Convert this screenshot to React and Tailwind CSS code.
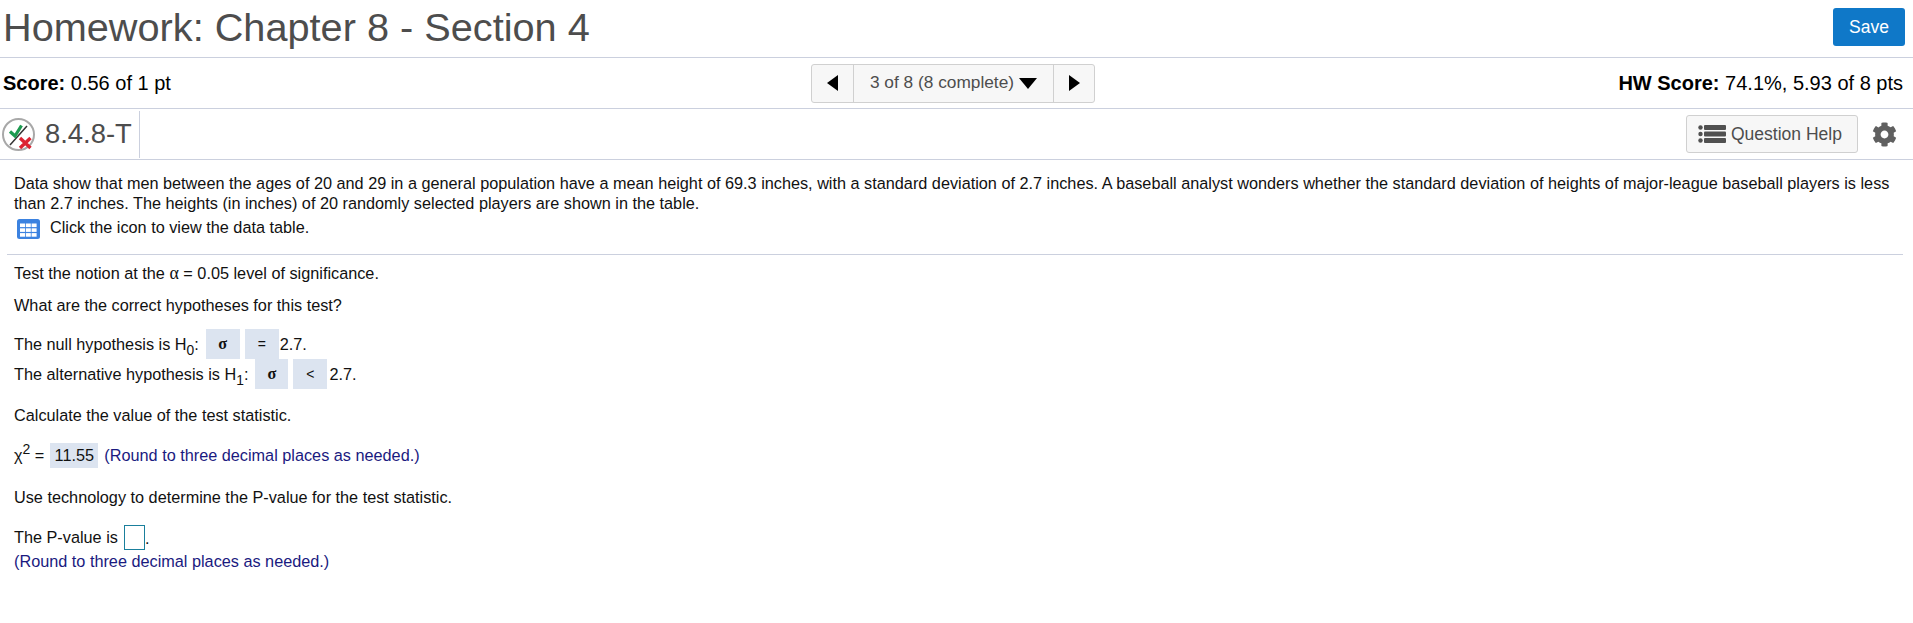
import { FaCog } from 'react-icons/fa'

// Small drawings used by the toolbar and the question body
function StatusIcon() {
  return (
    <svg width="33" height="33" viewBox="0 0 33 33" className="shrink-0">
      <circle cx="16.5" cy="16.5" r="15.5" fill="#fff" stroke="#a8a8a8" strokeWidth="2" />
      <path d="M8 27 L25 8" stroke="#333" strokeWidth="1.5" />
      <path d="M8 13.5 L13 18 L19.5 7.5" fill="none" stroke="#1d9a50" strokeWidth="3.2" />
      <path d="M18 20 L28.5 30 M28.5 20 L18 30" stroke="#dc2433" strokeWidth="3.4" />
    </svg>
  )
}

function ListIcon() {
  return (
    <svg width="28" height="18" viewBox="0 0 28 18" className="shrink-0" fill="#505050">
      <circle cx="2.5" cy="2.5" r="2.2" />
      <circle cx="2.5" cy="9" r="2.2" />
      <circle cx="2.5" cy="15.5" r="2.2" />
      <rect x="6" y="0" width="22" height="5" rx="1" />
      <rect x="6" y="6.5" width="22" height="5" rx="1" />
      <rect x="6" y="13" width="22" height="5" rx="1" />
    </svg>
  )
}

function TableIcon() {
  const cells = []
  for (let r = 0; r < 3; r++) {
    for (let c = 0; c < 3; c++) {
      cells.push(<rect key={`${r}-${c}`} x={3 + c * 5.8} y={4.5 + r * 4.8} width="5" height="3.6" fill="#fff" />)
    }
  }
  return (
    <svg width="23" height="20" viewBox="0 0 23 20" className="mt-1 shrink-0">
      <rect width="23" height="20" rx="2.5" fill="#3b82e0" />
      {cells}
    </svg>
  )
}

function Triangle({ dir }) {
  const points = { left: '11,0 11,16 0,8', right: '0,0 0,16 11,8' }
  return (
    <svg width="11" height="16" viewBox="0 0 11 16">
      <polygon points={points[dir]} fill="#000" />
    </svg>
  )
}

function Answer({ children, className = '' }) {
  return (
    <span className={`inline-flex items-center justify-center bg-[#dce4f0] ${className}`}>{children}</span>
  )
}

export default function App() {
  return (
    <div className="min-h-[623px] bg-white font-['Liberation_Sans',Arial,sans-serif] text-black">
      {/* Title */}
      <div className="flex h-[58px] items-start justify-between border-b border-[#cbd0de] pl-[3px] pr-2">
        <h1 className="mt-[3px] text-[39.7px] leading-[48px] text-[#4d4d4d]">Homework: Chapter 8 - Section 4</h1>
        <button className="mt-2 h-[38px] w-[72px] rounded-[3px] bg-[#0f78c8] text-[17.5px] text-white">Save</button>
      </div>

      {/* Score row */}
      <div className="grid h-[51px] grid-cols-[1fr_284px_1fr] items-center border-b border-[#cbd0de] pl-[3px] pr-[10px] text-[20px]">
        <div>
          <b>Score:</b> 0.56 of 1 pt
        </div>
        <div className="flex h-[39px] items-stretch rounded-[3px] border border-[#d0d0d0] bg-[#f7f7f7]">
          <div className="flex w-[42px] items-center justify-center border-r border-[#d0d0d0]">
            <Triangle dir="left" />
          </div>
          <div className="flex w-[200px] items-center justify-center gap-[5px] border-r border-[#d0d0d0] text-[17.3px] text-[#4d4d4d]">
            <span>3 of 8 (8 complete)</span>
            <svg width="18" height="11" viewBox="0 0 18 11">
              <polygon points="0,0 18,0 9,11" fill="#000" />
            </svg>
          </div>
          <div className="flex flex-1 items-center justify-center">
            <Triangle dir="right" />
          </div>
        </div>
        <div className="text-right">
          <b>HW Score:</b> 74.1%, 5.93 of 8 pts
        </div>
      </div>

      {/* Question id row */}
      <div className="flex h-[51px] items-center justify-between border-b border-[#cbd0de] pl-[2px] pr-4">
        <div className="flex h-[47px] w-[138px] items-center gap-[10px] border-r border-[#cbd0de]">
          <StatusIcon />
          <span className="text-[27.4px] text-[#4d4d4d]">8.4.8-T</span>
        </div>
        <div className="flex items-center gap-[14px]">
          <button className="flex h-[38px] w-[172px] items-center gap-[5px] rounded-[3px] border border-[#d0d0d0] bg-[#f7f7f7] pl-[11px] text-[17.5px] text-[#4d4d4d]">
            <ListIcon />
            Question Help
          </button>
          <FaCog className="text-[25px] text-[#606060]" />
        </div>
      </div>

      {/* Question body */}
      <div className="pl-[7px] pr-[10px] pt-[13px] text-[16.25px] text-[#111]">
        <div className="px-[7px] leading-[20px]">
          <p>
            Data show that men between the ages of 20 and 29 in a general population have a mean height of 69.3 inches, with a standard deviation of 2.7 inches. A baseball analyst wonders whether the standard deviation of heights of major-league baseball players is less than 2.7 inches. The heights (in inches) of 20 randomly selected players are shown in the table.
          </p>
          <p className="mt-[2px] flex h-[24px] items-center gap-[10px] pl-[3px]">
            <TableIcon />
            Click the icon to view the data table.
          </p>
        </div>
        <div className="mt-[15px] border-t border-[#cbd0de] px-[7px] pt-[8px]">
          <p className="leading-[20px]">
            Test the notion at the <span className="font-['Liberation_Serif',serif] text-[18px]">α</span> = 0.05 level of significance.
          </p>
          <p className="mt-[12px] leading-[20px]">What are the correct hypotheses for this test?</p>
          <p className="mt-[14px] flex h-[30px] items-center">
            <span>
              The null hypothesis is H<sub className="bottom-[-0.35em] text-[85%]">0</sub>:
            </span>
            <Answer className="ml-[7px] h-[30px] w-[34px] font-['Liberation_Serif',serif] font-bold">σ</Answer>
            <Answer className="ml-[5px] h-[30px] w-[34px] text-[14px]">=</Answer>
            <span className="ml-[1px]">2.7.</span>
          </p>
          <p className="flex h-[30px] items-center">
            <span>
              The alternative hypothesis is H<sub className="bottom-[-0.35em] text-[85%]">1</sub>:
            </span>
            <Answer className="ml-[7px] h-[30px] w-[33px] font-['Liberation_Serif',serif] font-bold">σ</Answer>
            <Answer className="ml-[5px] h-[30px] w-[34px] text-[14px]">&lt;</Answer>
            <span className="ml-[2px]">2.7.</span>
          </p>
          <p className="mt-[16px] leading-[20px]">Calculate the value of the test statistic.</p>
          <p className="mt-[18px] flex h-[25px] items-center">
            <span>
              χ<sup className="text-[14px]">2</sup> =
            </span>
            <Answer className="ml-[6px] h-[25px] w-[48px]">11.55</Answer>
            <span className="ml-[6px] text-[#1a1a80]">(Round to three decimal places as needed.)</span>
          </p>
          <p className="mt-[19px] leading-[20px]">Use technology to determine the P-value for the test statistic.</p>
          <p className="mt-[18px] flex h-[25px] items-center">
            The P-value is
            <span className="ml-[6px] h-[25px] w-[21px] border border-[#1a7f9c]" />
            <span className="self-end">.</span>
          </p>
          <p className="mt-[1px] leading-[20px] text-[#1a1a80]">(Round to three decimal places as needed.)</p>
        </div>
      </div>
    </div>
  )
}
